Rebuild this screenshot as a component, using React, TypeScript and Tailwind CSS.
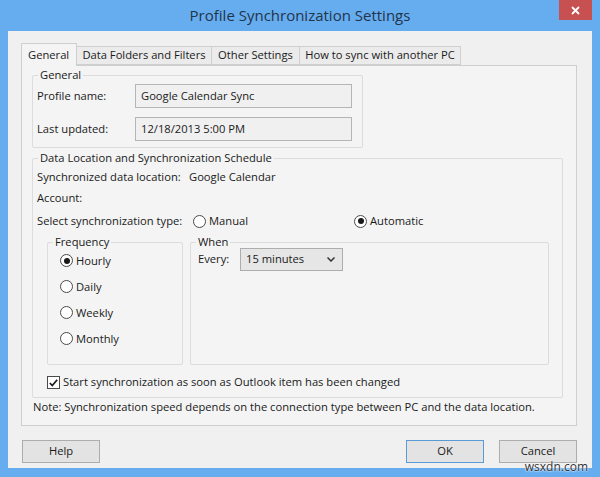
import React from 'react';

type GroupBoxProps = {
  title: string;
  className?: string;
  bodyClassName?: string;
  children: React.ReactNode;
};

// group box: border with the caption sitting on the top line
function GroupBox({ title, className = '', bodyClassName = '', children }: GroupBoxProps) {
  return (
    <fieldset className={`m-0 p-0 border border-[#dcdcdc] rounded-[2px] ${className}`}>
      <legend className="ml-[5px] px-[2px] leading-[16px]">{title}</legend>
      <div className={bodyClassName}>{children}</div>
    </fieldset>
  );
}

function Radio({ label, checked = false }: { label: string; checked?: boolean }) {
  return (
    <div className="flex items-center gap-[3px]">
      <span className="w-[13px] h-[13px] rounded-full border border-[#4a4a4a] bg-white flex items-center justify-center">
        {checked && <span className="w-[6px] h-[6px] rounded-full bg-[#1a1a1a]" />}
      </span>
      <span>{label}</span>
    </div>
  );
}

function Button({ label, primary = false }: { label: string; primary?: boolean }) {
  return (
    <button
      className={`w-[78px] h-[23px] bg-[#e3e3e3] border text-[#1a1a1a] ${
        primary ? 'border-[#5b9bd5]' : 'border-[#adadad]'
      }`}
    >
      {label}
    </button>
  );
}

const tabs = [
  { label: 'Data Folders and Filters', width: 'w-[135px]' },
  { label: 'Other Settings', width: 'w-[88px]' },
  { label: 'How to sync with another PC', width: 'w-[161px]' },
];

const frequencies = ['Hourly', 'Daily', 'Weekly', 'Monthly'];

export default function App() {
  return (
    <div className="relative w-[600px] h-[477px] bg-[#66adf0] flex flex-col font-['Open_Sans',sans-serif] text-[11.2px] text-[#1a1a1a]">
      {/* title bar */}
      <div className="relative h-[31px] flex items-center justify-center">
        <span className="text-[15px] text-[#22344a]">Profile Synchronization Settings</span>
        <button className="absolute right-[8px] top-0 w-[33px] h-[20px] bg-[#c75050] flex items-center justify-center">
          <svg width="9" height="9" viewBox="0 0 9 9">
            <path d="M1 1 L8 8 M8 1 L1 8" stroke="white" strokeWidth="1.8" />
          </svg>
        </button>
      </div>

      <div className="mx-[8px] h-[437px] bg-[#f0f0f0] flex flex-col pl-[13px] pr-[15px] pt-[12px]">
        {/* tab strip */}
        <div className="flex items-end h-[22px] relative z-10">
          <div className="w-[56px] h-[23px] -mb-[1px] bg-[#f4f4f4] border border-b-0 border-[#cfcfcf] flex items-center pl-[6px]">
            General
          </div>
          {tabs.map((t) => (
            <div
              key={t.label}
              className={`${t.width} h-[19px] bg-[#ebebeb] border border-l-0 border-[#cfcfcf] flex items-center justify-center`}
            >
              {t.label}
            </div>
          ))}
        </div>

        <div className="h-[361px] bg-[#f4f4f4] border border-[#cfcfcf] flex flex-col">
          <GroupBox title="General" className="ml-[10px] mt-[1px] w-[331px]" bodyClassName="pl-[4px] pb-[6px]">
            <div className="flex items-center mt-[1px]">
              <span className="w-[98px]">Profile name:</span>
              <div className="w-[217px] h-[24px] border border-[#b5b5b5] bg-[#f0f0f0] flex items-center pl-[5px]">
                Google Calendar Sync
              </div>
            </div>
            <div className="flex items-center mt-[9px]">
              <span className="w-[98px]">Last updated:</span>
              <div className="w-[217px] h-[24px] border border-[#b5b5b5] bg-[#f0f0f0] flex items-center pl-[5px]">
                12/18/2013 5:00 PM
              </div>
            </div>
          </GroupBox>

          <GroupBox
            title="Data Location and Synchronization Schedule"
            className="ml-[10px] mt-[2px] w-[531px]"
            bodyClassName="pl-[4px] pb-[4px]"
          >
            <div className="h-[21px] mt-[1px] flex items-center">
              <span className="w-[152px]">Synchronized data location:</span>
              <span>Google Calendar</span>
            </div>
            <div className="h-[21px] flex items-center">Account:</div>
            <div className="h-[21px] mt-[2px] flex items-center">
              <span className="w-[156px]">Select synchronization type:</span>
              <div className="w-[161px]">
                <Radio label="Manual" />
              </div>
              <Radio label="Automatic" checked />
            </div>

            <div className="flex mt-[2px] ml-[10px]">
              <GroupBox title="Frequency" className="w-[136px] h-[131px]" bodyClassName="pl-[12px]">
                <div className="flex flex-col gap-[4px]">
                  {frequencies.map((f) => (
                    <div key={f} className="h-[22px] flex items-center">
                      <Radio label={f} checked={f === 'Hourly'} />
                    </div>
                  ))}
                </div>
              </GroupBox>
              <GroupBox title="When" className="ml-[7px] w-[359px] h-[131px]" bodyClassName="pl-[7px]">
                <div className="flex items-center -mt-[2px]">
                  <span className="w-[42px]">Every:</span>
                  <div className="w-[103px] h-[23px] border border-[#adadad] bg-[#e6e6e6] flex items-center justify-between pl-[5px] pr-[7px]">
                    <span>15 minutes</span>
                    <svg width="8" height="5" viewBox="0 0 8 5">
                      <path d="M0.5 0.5 L4 4 L7.5 0.5" fill="none" stroke="#333" strokeWidth="1.5" />
                    </svg>
                  </div>
                </div>
              </GroupBox>
            </div>

            <div className="h-[21px] mt-[7px] ml-[10px] flex items-center gap-[3px]">
              <span className="w-[13px] h-[13px] border border-[#4a4a4a] bg-white flex items-center justify-center">
                <svg width="9" height="8" viewBox="0 0 9 8">
                  <path d="M0.8 4 L3.3 6.6 L8.2 0.8" fill="none" stroke="#1a1a1a" strokeWidth="1.7" />
                </svg>
              </span>
              <span>Start synchronization as soon as Outlook item has been changed</span>
            </div>
          </GroupBox>

          <p className="ml-[11px] mt-[1px] leading-[16px]">
            Note: Synchronization speed depends on the connection type between PC and the data location.
          </p>
        </div>

        {/* dialog buttons */}
        <div className="flex mt-[14px] pl-[1px]">
          <Button label="Help" />
          <div className="ml-auto flex gap-[15px]">
            <Button label="OK" primary />
            <Button label="Cancel" />
          </div>
        </div>
      </div>

      <span className="absolute right-[12px] bottom-[4px] text-[12px] leading-none text-[#333] [text-shadow:0_0_2px_white,0_0_2px_white]">
        wsxdn.com
      </span>
    </div>
  );
}
